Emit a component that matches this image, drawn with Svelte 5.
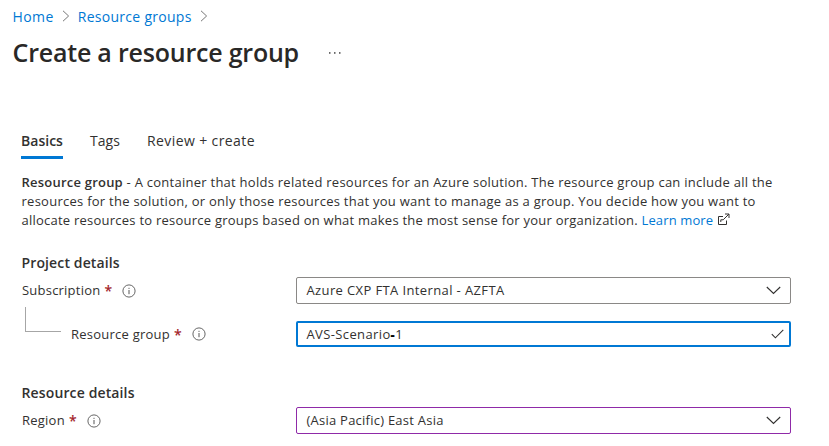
<script>
  let subscription = $state('Azure CXP FTA Internal - AZFTA');
  let region = $state('(Asia Pacific) East Asia');
</script>

{#snippet info()}
  <svg class="info" viewBox="0 0 14 14" width="14" height="14" fill="none" stroke="#555" aria-label="Info">
    <circle cx="7" cy="7" r="6.1" stroke-width=".9" />
    <path d="M7 6v4.2M7 3.8v1.1" stroke-width="1" />
  </svg>
{/snippet}

{#snippet chevron()}
  <svg class="chevron" viewBox="0 0 15 9" width="15" height="9" fill="none" stroke="#323130" stroke-width="1.1">
    <path d="M.8 1l6.7 6.5L14.2 1" />
  </svg>
{/snippet}

{#snippet crumbArrow()}
  <svg class="crumb-arrow" viewBox="0 0 8 12" width="8" height="12" fill="none" stroke="#777" stroke-width="1">
    <path d="M1 .8l5.6 5.2L1 11.2" />
  </svg>
{/snippet}

<main>
  <nav class="crumbs">
    <a href="#home" class="home">Home</a>
    {@render crumbArrow()}
    <a href="#groups">Resource groups</a>
    {@render crumbArrow()}
  </nav>

  <header>
    <h1>Create a resource group</h1>
    <svg class="more" viewBox="0 0 14 2" width="14" height="2" fill="#444" aria-label="More">
      <rect x="1" y=".2" width="1.5" height="1.5" />
      <rect x="6" y=".2" width="1.5" height="1.5" />
      <rect x="11" y=".2" width="1.5" height="1.5" />
    </svg>
  </header>

  <div class="tabs">
    <div class="tab active">Basics</div>
    <div class="tab tags">Tags</div>
    <div class="tab review">Review + create</div>
  </div>

  <p>
    <b>Resource group</b> <span class="l1">- A container that holds related resources for an Azure solution. The resource group can include all the</span><br />
    <span class="l2">resources for the solution, or only those resources that you want to manage as a group. You decide how you want to</span><br />
    <span class="l3">allocate resources to resource groups based on what makes the most sense for your organization.</span>
    <a href="#learn" class="learn">Learn more</a>
    <svg class="ext" viewBox="0 0 13 13" width="13" height="13" fill="none" stroke="#323130" stroke-width="1">
      <path d="M6 3.5H1.5v8h8V7.5M3.8 9V6.8h2.4L11.8 1.2M8 1h4v4" />
    </svg>
  </p>

  <h2>Project details</h2>
  <div class="row">
    <div class="label"><span class="sub">Subscription</span><i>*</i>{@render info()}</div>
    <div class="field"><span class="wide">{subscription}</span>{@render chevron()}</div>
  </div>
  <div class="row nested">
    <div class="label">
      <span class="branch"></span><span>Resource group</span><i>*</i>{@render info()}
    </div>
    <div class="field focused">
      <span class="wide name">AVS-Scenario<b class="dash">-</b>1</span>
      <svg class="check" viewBox="0 0 13 10" width="13" height="10" fill="none" stroke="#323130" stroke-width="1.1">
        <path d="M.8 5.2l3.6 3.6L12.3 .8" />
      </svg>
    </div>
  </div>

  <h2 class="second">Resource details</h2>
  <div class="row">
    <div class="label"><span>Region</span><i>*</i>{@render info()}</div>
    <div class="field region"><span>{region}</span>{@render chevron()}</div>
  </div>
</main>

<style>
  :global(body) { margin: 0; background: #fff; }
  main {
    box-sizing: border-box;
    width: 829px;
    height: 446px;
    overflow: hidden;
    background: #fff;
    color: #323130;
    font: 13px/19px "Open Sans", "Noto Sans", sans-serif;
    letter-spacing: 0.24px;
  }
  a { color: #0078d4; text-decoration: none; }
  svg { flex: none; display: block; }
  .crumbs {
    display: flex;
    align-items: center;
    height: 20px;
    padding: 6px 0 0 12.5px;
    font-size: 14px;
    letter-spacing: 0.28px;
  }
  .home { letter-spacing: 0.42px; }
  .crumb-arrow { margin: 0 8px 0 8px; }
  header { display: flex; align-items: center; height: 34px; padding: 9px 0 0 12.5px; }
  h1 { margin: 0; font-size: 25px; line-height: 34px; font-weight: 600; letter-spacing: -0.21px; color: #292827; }
  .more { margin: 1px 0 0 29px; }
  .tabs { display: flex; margin: 60px 0 0 21px; height: 30px; font-size: 14px; line-height: 24px; }
  .tab { height: 27px; }
  .active { width: 42px; font-weight: 600; letter-spacing: 0.02px; border-bottom: 3px solid #0078d4; }
  .tags { margin-left: 27px; width: 30px; letter-spacing: 0.05px; }
  .review { margin-left: 27px; letter-spacing: 0.4px; }
  p { margin: 14px 0 0 21.5px; white-space: nowrap; }
  p b { font-weight: 600; letter-spacing: 0.22px; }
  .l1 { letter-spacing: 0.26px; }
  .l2 { letter-spacing: 0.262px; }
  .l3 { letter-spacing: 0.238px; }
  .learn { letter-spacing: 0.12px; }
  .ext { display: inline-block; vertical-align: -1px; }
  h2 { margin: 23px 0 0 21.5px; font-size: 14px; line-height: 19px; font-weight: 600; letter-spacing: 0.13px; }
  h2.second { margin-top: 36px; }
  .row { display: flex; align-items: center; height: 27px; margin: 5px 0 0 22px; }
  .row.nested { margin-top: 17px; height: 26px; }
  .label { display: flex; align-items: center; box-sizing: border-box; width: 274px; height: 26px; }
  .sub { letter-spacing: 0.22px; }
  i { margin-left: 4px; color: #a4262c; font-style: normal; font-weight: 600; font-size: 14px; }
  .info { margin-left: 10px; }
  .branch {
    box-sizing: border-box;
    width: 36px;
    height: 25px;
    margin: -30px 10px 0 3px;
    border-left: 1px solid #a6a6a6;
    border-bottom: 1px solid #a6a6a6;
  }
  .field {
    box-sizing: border-box;
    display: flex;
    align-items: center;
    justify-content: space-between;
    width: 495px;
    height: 27px;
    padding: 0 9px 0 9.5px;
    border: 1px solid #8a8886;
    border-radius: 2px;
  }
  .field span { line-height: 19px; }
  .wide { letter-spacing: 0.38px; }
  .focused { height: 26px; border: 2px solid #0078d4; padding: 0 5px 0 8.5px; }
  .dash { color: #000; font-weight: 800; }
  .region { border-color: #8f2aa8; }
</style>
